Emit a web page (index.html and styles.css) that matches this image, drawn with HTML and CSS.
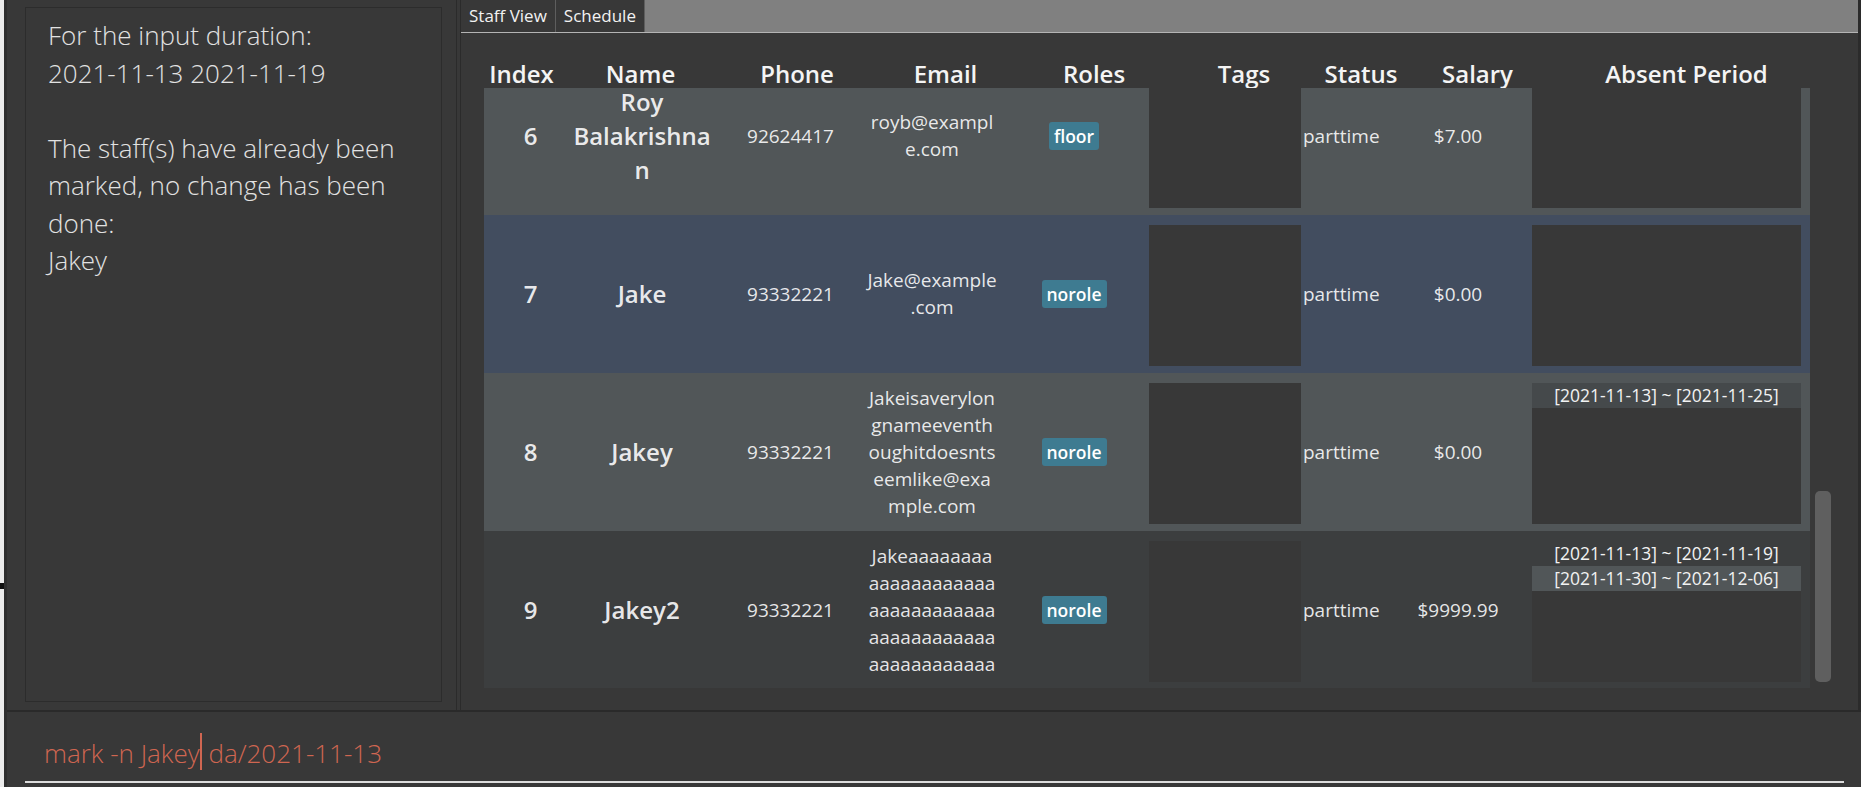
FILE: index.html
```html
<!DOCTYPE html>
<html>
<head>
<meta charset="utf-8">
<link rel="stylesheet" href="styles.css">
</head>
<body>
<div class="app">
  <div class="edge"><div class="edge-mark"></div></div>
  <div class="window">
    <div class="main">
      <div class="left-pane">
        <div class="result-box">
          <p class="result-text">For the input duration:<br>2021-11-13 2021-11-19<br><br>The staff(s) have already been<br>marked, no change has been<br>done:<br>Jakey</p>
        </div>
      </div>
      <div class="right-pane">
        <div class="tabbar">
          <div class="tab">Staff View</div>
          <div class="tab">Schedule</div>
        </div>
        <div class="table">
          <div class="thead">
            <div class="h h-idx">Index</div>
            <div class="h h-name">Name</div>
            <div class="h h-phone">Phone</div>
            <div class="h h-email">Email</div>
            <div class="h h-role">Roles</div>
            <div class="h h-tags">Tags</div>
            <div class="h h-status">Status</div>
            <div class="h h-salary">Salary</div>
            <div class="h h-absent">Absent Period</div>
          </div>
          <div class="tbody-wrap">
            <div class="tbody">
              <div class="row odd">
                <div class="c c-idx big">6</div>
                <div class="c c-name big">Roy<br>Balakrishna<br>n</div>
                <div class="c c-phone">92624417</div>
                <div class="c c-email">royb@exampl<br>e.com</div>
                <div class="c c-role"><span class="badge">floor</span></div>
                <div class="box c-tags"></div>
                <div class="c c-status">parttime</div>
                <div class="c c-salary">$7.00</div>
                <div class="box c-absent"></div>
              </div>
              <div class="row sel">
                <div class="c c-idx big">7</div>
                <div class="c c-name big">Jake</div>
                <div class="c c-phone">93332221</div>
                <div class="c c-email">Jake@example<br>.com</div>
                <div class="c c-role"><span class="badge">norole</span></div>
                <div class="box c-tags"></div>
                <div class="c c-status">parttime</div>
                <div class="c c-salary">$0.00</div>
                <div class="box c-absent"></div>
              </div>
              <div class="row odd">
                <div class="c c-idx big">8</div>
                <div class="c c-name big">Jakey</div>
                <div class="c c-phone">93332221</div>
                <div class="c c-email">Jakeisaverylon<br>gnameeventh<br>oughitdoesnts<br>eemlike@exa<br>mple.com</div>
                <div class="c c-role"><span class="badge">norole</span></div>
                <div class="box c-tags"></div>
                <div class="c c-status">parttime</div>
                <div class="c c-salary">$0.00</div>
                <div class="box c-absent">
                  <div class="period p-hl">[2021-11-13] ~ [2021-11-25]</div>
                </div>
              </div>
              <div class="row even">
                <div class="c c-idx big">9</div>
                <div class="c c-name big">Jakey2</div>
                <div class="c c-phone">93332221</div>
                <div class="c c-email">Jakeaaaaaaaa<br>aaaaaaaaaaaa<br>aaaaaaaaaaaa<br>aaaaaaaaaaaa<br>aaaaaaaaaaaa</div>
                <div class="c c-role"><span class="badge">norole</span></div>
                <div class="box c-tags"></div>
                <div class="c c-status">parttime</div>
                <div class="c c-salary">$9999.99</div>
                <div class="box c-absent">
                  <div class="period p-even">[2021-11-13] ~ [2021-11-19]</div>
                  <div class="period p-odd">[2021-11-30] ~ [2021-12-06]</div>
                </div>
              </div>
            </div>
            <div class="vscroll"><div class="thumb"></div></div>
          </div>
        </div>
      </div>
    </div>
    <div class="command">
      <div class="command-field">mark -n Jakey<span class="caret"></span> da/2021-11-13</div>
    </div>
  </div>
</div>
</body>
</html>
```

FILE: styles.css
```css
html, body {
  margin: 0;
  padding: 0;
}
body {
  width: 1861px;
  height: 787px;
  overflow: hidden;
  background: #383838;
  font-family: "Open Sans", "Noto Sans", sans-serif;
}
.app {
  display: flex;
  height: 787px;
}
.edge {
  width: 4px;
  flex: none;
  background: #ececec;
}
.edge-mark {
  margin-top: 583px;
  height: 6px;
  background: #111;
}
.window {
  flex: 1;
  display: flex;
  flex-direction: column;
  border-left: 3px solid #2f2f2f;
  min-width: 0;
}
.main {
  display: flex;
  height: 710px;
  border-bottom: 2px solid #2a2a2a;
  flex: none;
}
.left-pane {
  flex: none;
  border-right: 1px solid #2b2b2b;
  padding: 7px 14px 8px 18px;
  box-sizing: border-box;
  width: 450px;
}
.result-box {
  height: 100%;
  box-sizing: border-box;
  border: 1px solid #2c2c2c;
  background: #383838;
  padding: 9px 10px 0 22px;
}
.result-text {
  margin: 0;
  font-weight: 300;
  font-size: 26px;
  line-height: 37.5px;
  color: #e2e2e2;
}
.right-pane {
  flex: 1;
  margin-left: 3px;
  border-left: 1px solid #2b2b2b;
  border-right: 3px solid #2b2b2b;
  display: flex;
  flex-direction: column;
  min-width: 0;
}
.tabbar {
  height: 32px;
  background: #808080;
  border-bottom: 1px solid #b4b4b4;
  display: flex;
  flex: none;
}
.tab {
  background: #383838;
  border-right: 1px solid #5e5e5e;
  color: #f2f2f2;
  font-size: 17px;
  line-height: 32px;
  padding: 0 8px;
}
.table {
  flex: 1;
  padding-left: 23px;
}
.thead {
  display: flex;
  margin-top: 26px;
  height: 29px;
  color: #f4f4f4;
  font-size: 24px;
  font-weight: 600;
  line-height: 29px;
  white-space: nowrap;
}
.h {
  display: flex;
  justify-content: center;
}
.h-idx { width: 75px; }
.h-name { width: 163px; }
.h-phone { width: 150px; }
.h-email { width: 147px; }
.h-role { width: 150px; }
.h-tags { width: 150px; }
.h-status { width: 84px; }
.h-salary { width: 149px; }
.h-absent { width: 269px; }

.tbody-wrap {
  display: flex;
}
.tbody {
  width: 1326px;
  height: 600px;
  overflow: hidden;
}
.row {
  display: flex;
  height: 158px;
  background: #515658;
  color: rgba(255, 255, 255, 0.88);
  font-size: 19px;
  line-height: 27px;
  white-space: nowrap;
}
.row:first-child {
  margin-top: -31px;
}
.row.sel { background: #424d5f; }
.row.even { background: #3c3e3f; }
.c {
  display: flex;
  align-items: center;
  justify-content: center;
  text-align: center;
  box-sizing: border-box;
}
.big {
  font-size: 24px;
  font-weight: 600;
  line-height: 34px;
  color: rgba(255, 255, 255, 0.9);
}
.c-idx { width: 93px; }
.c-name { width: 130px; }
.c-phone { width: 167px; }
.c-email { width: 116px; }
.c-role { width: 159px; padding-left: 9px; }
.c-status { width: 99px; padding-left: 2px; justify-content: flex-start; }
.c-salary { width: 116px; }
.box {
  background: #383838;
  margin: 10px 0 7px 0;
}
.c-tags { width: 152px; }
.c-absent { width: 269px; margin-left: 16px; }
.badge {
  background: #3e7b91;
  color: #ffffff;
  font-size: 17.5px;
  font-weight: 600;
  line-height: 28px;
  padding: 0 5px;
  border-radius: 3px;
}
.period {
  height: 25px;
  font-size: 17.5px;
  line-height: 25px;
  text-align: center;
  color: #f2f2f2;
}
.p-hl { background: #45494b; }
.p-even { background: #3c3e3f; }
.p-odd { background: #515658; }
.vscroll {
  width: 16px;
  margin-left: 5px;
}
.thumb {
  margin-top: 403px;
  height: 191px;
  background: #5f5f5f;
  border-radius: 5px;
}
.command {
  flex: 1;
  padding: 21px 0 0 18px;
}
.command-field {
  width: 1819px;
  box-sizing: border-box;
  padding: 0 0 11px 19px;
  border-bottom: 2px solid #dcdcdc;
  font-weight: 300;
  font-size: 26px;
  line-height: 34px;
  color: #d06651;
  white-space: pre;
}
.caret {
  display: inline-block;
  width: 2px;
  height: 37px;
  background: #d06651;
  vertical-align: -7px;
}
```
